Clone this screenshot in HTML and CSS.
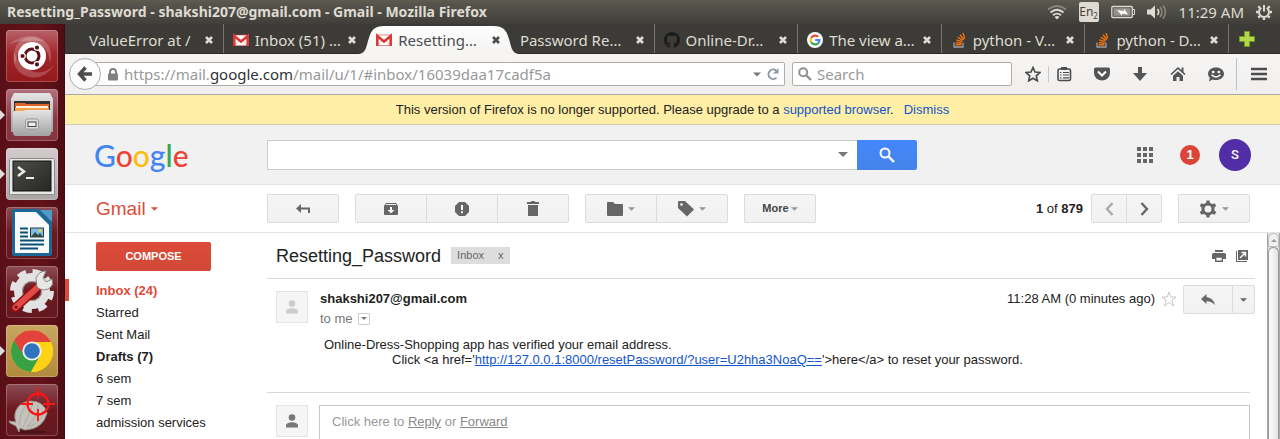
FILE: index.html
```html
<!DOCTYPE html>
<html lang="en">
<head>
<meta charset="utf-8">
<title>Resetting_Password - shakshi207@gmail.com - Gmail</title>
<link rel="stylesheet" href="styles.css">
</head>
<body>
<svg class="defs" width="0" height="0" aria-hidden="true">
  <defs>
    <linearGradient id="silver" x1="0" y1="0" x2="0" y2="1"><stop offset="0" stop-color="#e4e4e4"/><stop offset="1" stop-color="#a2a2a2"/></linearGradient>
    <linearGradient id="dark" x1="0" y1="0" x2="1" y2="1"><stop offset="0" stop-color="#4d4d4b"/><stop offset="1" stop-color="#262624"/></linearGradient>
    <linearGradient id="tabfill" x1="0" y1="0" x2="0" y2="1"><stop offset="0" stop-color="#fdfdfd"/><stop offset="1" stop-color="#f5f4f3"/></linearGradient>
    <symbol id="close" viewBox="0 0 10 10"><path d="M2 2l6 6M8 2l-6 6" stroke="currentColor" stroke-width="2.6"/></symbol>
    <symbol id="mail" viewBox="0 0 16 16"><rect y="3" width="16" height="11" rx="1" fill="#fff"/><path d="M2 13L6 8.500M14 13l-4-4.500" stroke="#d9b8b5"/><path d="M1.300 14V4L8 9.500 14.700 4v10" fill="none" stroke="#dc3a36" stroke-width="2.600"/><path d="M0 3h16M0 13.500h16" stroke="#dc3a36" stroke-opacity=".6"/></symbol>
    <symbol id="stack" viewBox="0 0 16 16"><path d="M3 10.500V15h9v-4.500" fill="none" stroke="#9aa0a6" stroke-width="1.300"/><path d="M4.500 12.800h6M4.700 10.600l6 .7M5.300 8l5.800 1.700M6.700 5.200l5.200 3.200M9 2.800l4 4.700M12 1l1.800 5.400" stroke="#f0720f" stroke-width="1.400"/></symbol>
    <symbol id="caret" viewBox="0 0 8 4"><path d="M0 0h8L4 4z" fill="currentColor"/></symbol>
    <symbol id="person" viewBox="0 0 14 14"><circle cx="7" cy="3.500" r="3.300" fill="currentColor"/><path d="M1 13.500v-2C1 9.500 4.500 8.300 7 8.300s6 1.200 6 3.200v2z" fill="currentColor"/></symbol>
  </defs>
</svg>

<header class="panel">
  <div class="panel-title">Resetting_Password - shakshi207@gmail.com - Gmail - Mozilla Firefox</div>
  <div class="indicators">
    <svg width="20" height="16" viewBox="0 0 20 16" fill="none" stroke-width="1.800"><path d="M1 5.500Q10-1.500 19 5.500" stroke="#8a877f"/><path d="M3.500 8.500Q10 3 16.500 8.500M6 11.200q4-3.200 8 0" stroke="#dfdbd2"/><path d="M7.500 13q2.500-2 5 0L10 15.500z" fill="#dfdbd2"/></svg>
    <span class="lang">En<sub>2</sub></span>
    <svg width="24" height="14" viewBox="0 0 24 14"><rect x=".8" y="1.500" width="20.500" height="11" rx="1" fill="none" stroke="#dfdbd2" stroke-width="1.300"/><rect x="2.500" y="3.200" width="17" height="7.600" fill="#96938c"/><path d="M22 4.500h1.500v5H22" stroke="#dfdbd2" fill="none"/><path d="M6 5l7 1 0-2.500 4 6-6-1v2.300z" fill="#fff"/></svg>
    <svg width="20" height="16" viewBox="0 0 20 16"><path d="M0 5.500h3.500L8 1.500v13L3.500 10.500H0z" fill="#dfdbd2"/><g fill="none" stroke-width="1.600"><path d="M10.500 5q2.400 3 0 6" stroke="#dfdbd2"/><path d="M13 3q4 5 0 10M16 1.500q5 6.500 0 13" stroke="#8a877f"/></g></svg>
    <time>11:29 AM</time>
    <svg width="16" height="16" viewBox="0 0 16 16" fill="none" stroke="#dfdbd2"><path d="M5.300 3.800a5 5 0 1 0 5.400 0" stroke-width="2"/><path d="M8 1v6.500" stroke-width="2"/><path d="M0 8h2M14 8h2M2.300 2.300l1.600 1.600M13.700 2.300l-1.600 1.600M2.300 13.700l1.600-1.600M13.700 13.700l-1.600-1.600M8 16v-2" stroke-width="2.400"/></svg>
  </div>
</header>

<div class="desktop">
  <nav class="launcher" aria-label="Launcher">
    <button class="tile dash" aria-label="Dash"><svg viewBox="0 0 52 52"><g fill="#fff" fill-opacity=".2"><path d="M3 14Q22 1 36 9q12 8 8 25-1-18-15-22Q16 9 3 14z"/><path d="M9 36Q4 14 20 8q10-3 18 4-14-4-22 5-6 7-7 19z"/><path d="M8 22q-3 20 15 25 16 3 25-12-12 12-24 5Q12 34 8 22z"/></g><circle cx="26" cy="26" r="14" fill="#fff"/><circle cx="26" cy="26" r="7" fill="none" stroke="#5c1018" stroke-width="3"/><g fill="#5c1018" stroke="#fff" stroke-width="1.200"><circle cx="16.500" cy="26" r="2.700"/><circle cx="31" cy="17.600" r="2.700"/><circle cx="31" cy="34.400" r="2.700"/></g></svg></button>
    <button class="tile files running" aria-label="Files"><svg viewBox="0 0 52 52"><path d="M8 4h36l3 6v33H5V10z" fill="url(#silver)"/><path d="M8 12h36v10H8z" fill="#343434"/><path d="M9 14h10l1 1h23v7H9z" fill="#e0652a"/><path d="M10 17h32v3H10z" fill="#fff3dd"/><path d="M9 19h34v3H9z" fill="#f5a24e"/><path d="M7 24q0-2 2-2h8l3-1h25v22q0 4-3 4H10q-3 0-3-4z" fill="url(#silver)"/><rect x="19.500" y="30" width="13" height="10" rx="2" fill="#ddd" stroke="#999"/><rect x="22" y="33" width="8" height="4.500" fill="#eee" stroke="#444"/></svg></button>
    <button class="tile terminal running" aria-label="Terminal"><svg viewBox="0 0 52 52"><rect x="3.500" y="10.500" width="45" height="36" rx="1" fill="#e8e8e6" stroke="#8c8b89"/><rect x="7" y="13" width="38" height="30" fill="url(#dark)" stroke="#111"/><path d="M12 19l6 4.500-6 4.500" fill="none" stroke="#eee" stroke-width="2.400"/><path d="M20 30h8" stroke="#eee" stroke-width="2"/></svg></button>
    <button class="tile writer" aria-label="Writer"><svg viewBox="0 0 52 52"><path d="M8 2h25l13 13v32q0 2-2 2H8q-2 0-2-2V4q0-2 2-2z" fill="#1b6798"/><path d="M9 5h21l13 13v28H9z" fill="#fafafa"/><path d="M34 3h12v12z" fill="#4d9ac9"/><path d="M14 21.500h8M14 25.500h8M14 29.500h8M14 33.500h24M14 37.500h24M14 41.500h18" stroke="#075077" stroke-width="2"/><rect x="24.500" y="21" width="13" height="9" fill="#80bce5" stroke="#243c50"/><circle cx="34" cy="23.500" r="1.500" fill="#f6d33d"/><path d="M25 30l4-5 3 3 2-2 3 4z" fill="#314b42"/></svg></button>
    <button class="tile settings" aria-label="System Settings"><svg viewBox="0 0 52 52"><circle cx="26" cy="25" r="19" fill="none" stroke="#e2e2e2" stroke-width="6" stroke-dasharray="8.500 6.420"/><circle cx="26" cy="25" r="14" fill="none" stroke="#e2e2e2" stroke-width="8"/><circle cx="26" cy="25" r="9.500" fill="none" stroke="#aaa"/><path d="M9 42L33 20" stroke="#8e1012" stroke-width="9" stroke-linecap="round"/><path d="M9.500 41.500L32.500 20.500" stroke="#df4b49" stroke-width="6" stroke-linecap="round"/><path d="M31 21l-1-9q3-7 10-7l-3 7 3 4 6-3q2 7-4 10-5 2-8 0z" fill="#e8e8e6" stroke="#888"/><circle cx="10" cy="41" r="1.600" fill="#7a1012"/></svg></button>
    <button class="tile chrome running" aria-label="Chrome"><svg viewBox="0 0 52 52"><circle cx="26" cy="26" r="21" fill="#ffd313"/><path d="M7.900 15.500A21 21 0 0 1 44.100 15.500L45 17H26L17 31z" fill="#e2443d"/><path d="M7.900 15.500A21 21 0 0 0 25 47l9-16-16-.5z" fill="#38a144"/><path d="M26 17h19a21 21 0 0 1-20 30l9-16z" fill="#ffd313"/><circle cx="26" cy="26" r="9.600" fill="#f3f3f3"/><circle cx="26" cy="26" r="7.800" fill="#2f74bd"/></svg></button>
    <button class="tile shutter" aria-label="Screenshot"><svg viewBox="0 0 52 52"><ellipse cx="26" cy="48" rx="15" ry="1.500" fill="#45131a"/><path d="M3 37l7 1C6 28 13 18 24 17q14 0 17 12-4 16-22 17l-5-2-1 4-3-6-6-3z" fill="#c3c3bb" stroke="#92928b"/><path d="M13 42Q14 24 24 18M17 43q7-14 10-24M20 43q12-9 12-22M22 43q14-5 16-16" fill="none" stroke="#ababa4"/><circle cx="32" cy="20" r="10.500" fill="none" stroke="#f91515" stroke-width="2.300"/><path d="M32 3v12M32 25v12M15 20h12M37 20h12" stroke="#f91515" stroke-width="1.800"/></svg></button>
  </nav>

  <div class="browser">
    <div class="tabs">
      <div class="tab"><span class="tab-label">ValueError at /</span><button class="close" aria-label="Close tab"><svg><use href="#close"/></svg></button></div>
      <div class="tab plain"><svg class="fav"><use href="#mail"/></svg><span class="tab-label">Inbox (51) …</span><button class="close" aria-label="Close tab"><svg><use href="#close"/></svg></button></div>
      <div class="tab active"><svg class="tab-shape" viewBox="0 0 164 28" preserveAspectRatio="none"><path d="M0 28C10 28 9 20 12 12 14 4 18 0 27 0H137c9 0 13 4 15 12 3 8 2 16 12 16z" fill="url(#tabfill)"/></svg><svg class="fav"><use href="#mail"/></svg><span class="tab-label">Resetting…</span><button class="close" aria-label="Close tab"><svg><use href="#close"/></svg></button></div>
      <div class="tab"><span class="tab-label">Password Re…</span><button class="close" aria-label="Close tab"><svg><use href="#close"/></svg></button></div>
      <div class="tab"><svg class="fav" viewBox="0 0 16 16"><path fill="#1b1b1b" d="M8 0C3.580 0 0 3.580 0 8c0 3.540 2.290 6.530 5.470 7.590.4.070.55-.17.55-.38v-1.500c-2.200.5-2.700-.9-2.700-.9-.4-.9-.9-1.200-.9-1.200-.7-.5.1-.5.1-.5.8.1 1.200.8 1.200.8.700 1.200 1.900.9 2.300.7.100-.5.300-.9.500-1.100-1.800-.2-3.600-.9-3.600-4 0-.9.300-1.600.8-2.100-.1-.2-.4-1 .1-2.100 0 0 .7-.2 2.200.8a7.600 7.600 0 0 1 4 0c1.500-1 2.200-.8 2.200-.8.400 1.100.2 1.900.1 2.100.5.600.8 1.300.8 2.100 0 3.100-1.900 3.800-3.700 4 .3.200.6.700.6 1.500v2.200c0 .2.100.5.500.4A8 8 0 0 0 16 8c0-4.420-3.580-8-8-8z"/></svg><span class="tab-label">Online-Dr…</span><button class="close" aria-label="Close tab"><svg><use href="#close"/></svg></button></div>
      <div class="tab"><svg class="fav" viewBox="0 0 16 16" fill="none" stroke-width="2.200"><circle cx="8" cy="8" r="8" fill="#fff"/><path d="M4.200 5.800A4.500 4.500 0 0 1 11.200 4.800" stroke="#ea4335"/><path d="M4.200 5.800a4.500 4.500 0 0 0 0 4.400" stroke="#fbbc05"/><path d="M4.200 10.200a4.500 4.500 0 0 0 6.800 1.200" stroke="#34a853"/><path d="M11 11.400A4.500 4.500 0 0 0 12.400 8H8.200" stroke="#4285f4"/></svg><span class="tab-label">The view a…</span><button class="close" aria-label="Close tab"><svg><use href="#close"/></svg></button></div>
      <div class="tab"><svg class="fav"><use href="#stack"/></svg><span class="tab-label">python - V…</span><button class="close" aria-label="Close tab"><svg><use href="#close"/></svg></button></div>
      <div class="tab"><svg class="fav"><use href="#stack"/></svg><span class="tab-label">python - D…</span><button class="close" aria-label="Close tab"><svg><use href="#close"/></svg></button></div>
      <button class="new-tab" aria-label="New tab"><svg width="16" height="16" viewBox="0 0 16 16"><path d="M5.500.5h5v5h5v5h-5v5h-5v-5h-5v-5h5z" fill="#b4d84a" stroke="#6f9a1e"/></svg></button>
    </div>

    <div class="toolbar">
      <button class="back" aria-label="Back"><svg width="16" height="16" viewBox="0 0 16 16" fill="none" stroke="#4c4c4c" stroke-width="3.400"><path d="M8.500 1.500L2.500 8l6 6.500M3 8h12"/></svg></button>
      <div class="url">
        <svg width="10" height="13" viewBox="0 0 10 13"><path d="M2 6V4a3 3 0 0 1 6 0v2" fill="none" stroke="#808080" stroke-width="2"/><rect y="5.500" width="10" height="7" rx="1" fill="#808080"/></svg>
        <div class="address">https://mail.<b>google.com</b>/mail/u/1/#inbox/16039daa17cadf5a</div>
        <svg class="url-caret"><use href="#caret"/></svg>
        <svg width="12" height="12" viewBox="0 0 12 12"><path d="M9.500 9.600A4.700 4.700 0 1 1 9.300 2.700" fill="none" stroke="#8a9aaa" stroke-width="2"/><path d="M11.500 0v5.500H6z" fill="#8a9aaa"/></svg>
      </div>
      <label class="search">
        <svg width="14" height="14" viewBox="0 0 14 14" fill="none" stroke="#909090"><circle cx="5.200" cy="5.200" r="4" stroke-width="2"/><path d="M8.300 8.300L13 13" stroke-width="2.400"/></svg>
        <input type="text" placeholder="Search" aria-label="Search the web">
      </label>
      <div class="tools">
        <button aria-label="Bookmark"><svg viewBox="0 0 16 16"><path d="M8 1.500l2 4.500 5 .5-3.700 3.300 1 5L8 12.300l-4.300 2.500 1-5L1 6.500 6 6z" fill="none" stroke="#4c4c4c" stroke-width="1.700"/></svg></button>
        <button class="ruled" aria-label="Bookmarks list"><svg viewBox="0 0 16 16"><rect x="2" y="3" width="12.500" height="11.500" rx="1.500" fill="none" stroke="#4c4c4c" stroke-width="1.600"/><path d="M5 1h6v3H5z" fill="#4c4c4c"/><path d="M4 6.500h1.500M4 9h1.500M4 11.800h1.500M7 6.500h6M7 9h6M7 11.800h6" stroke="#4c4c4c" stroke-width="1.200"/></svg></button>
        <button aria-label="Pocket"><svg viewBox="0 0 16 16"><path d="M1.500 1.500h13q1.500 0 1.500 1.500v4a8 7.500 0 0 1-16 0V3q0-1.500 1.500-1.500z" fill="#555"/><path d="M4 5.500l4 4 4-4" fill="none" stroke="#fff" stroke-width="2"/></svg></button>
        <button aria-label="Downloads"><svg viewBox="0 0 16 16"><path d="M6 1h4v6h5l-7 8-7-8h5z" fill="#555"/></svg></button>
        <button aria-label="Home"><svg viewBox="0 0 16 16"><path d="M1 8.500l7-6.500 7 6.500" fill="none" stroke="#4c4c4c" stroke-width="1.600"/><path d="M11.500 1.500h2V6h-2zM3 9.800l5-4.600 5 4.600V15H9.500v-4h-3v4H3z" fill="#555"/></svg></button>
        <button aria-label="Chat"><svg viewBox="0 0 16 16"><path d="M8 1.500c4.400 0 8 2.700 8 6.200s-3.600 6.300-8 6.300q-2 0-3.500-.6L1 15.500l.8-3.800Q0 10 0 7.700C0 4.200 3.600 1.500 8 1.500z" fill="#555"/><circle cx="5.200" cy="6" r="1.300" fill="#fff"/><circle cx="10.800" cy="6" r="1.300" fill="#fff"/><path d="M3.500 8.800q4.500 4.500 9 0" fill="none" stroke="#fff" stroke-width="1.500"/></svg></button>
        <button class="menu" aria-label="Menu"><svg viewBox="0 0 16 16"><path d="M0 3h16M0 8h16M0 13h16" stroke="#4c4c4c" stroke-width="2.600"/></svg></button>
      </div>
    </div>

    <div class="notice">This version of Firefox is no longer supported. Please upgrade to a <a href="#">supported browser</a>.<a class="dismiss" href="#">Dismiss</a></div>

    <div class="gbar">
      <a class="logo" href="#" aria-label="Google"><span class="blue">G</span><span class="red">o</span><span class="yellow">o</span><span class="blue">g</span><span class="green">l</span><span class="red">e</span></a>
      <form class="gsearch">
        <input type="text" aria-label="Search mail">
        <button type="button" class="options" aria-label="Search options"><svg width="10" height="5"><use href="#caret"/></svg></button>
        <button type="button" class="go" aria-label="Search"><svg width="16" height="16" viewBox="0 0 16 16" fill="none" stroke="#fff"><circle cx="6" cy="6" r="4.500" stroke-width="2"/><path d="M9.500 9.500L15 15" stroke-width="2.400"/></svg></button>
      </form>
      <div class="account">
        <button aria-label="Apps"><svg width="16" height="16" viewBox="0 0 16 16" fill="#666"><path d="M0 0h4v4H0zM6 0h4v4H6zM12 0h4v4h-4zM0 6h4v4H0zM6 6h4v4H6zM12 6h4v4h-4zM0 12h4v4H0zM6 12h4v4H6zM12 12h4v4h-4z"/></svg></button>
        <button class="count">1</button>
        <button class="avatar">S</button>
      </div>
    </div>

    <div class="actions">
      <button class="brand">Gmail <svg width="7" height="4"><use href="#caret"/></svg></button>
      <div class="groups">
        <div class="group"><button aria-label="Back to inbox"><svg width="14" height="10" viewBox="0 0 14 10"><path d="M0 4.500L5 0v3.500h9V9h-2V5.500H5V9z" fill="#666"/></svg></button></div>
        <div class="group">
          <button aria-label="Archive"><svg width="14" height="14" viewBox="0 0 14 14"><path d="M2 1h10l2 3v8q0 1-1 1H1q-1 0-1-1V4z" fill="#666"/><path d="M2 2.500h10" stroke="#f3f3f3"/><path d="M6 5h2v3h2.500L7 11.300 3.500 8H6z" fill="#fff"/></svg></button>
          <button aria-label="Report spam"><svg width="14" height="14" viewBox="0 0 14 14"><path d="M4 0h6l4 4v6l-4 4H4l-4-4V4z" fill="#666"/><path d="M6 3h2v5H6zM6 9.300h2v2H6z" fill="#fff"/></svg></button>
          <button aria-label="Delete"><svg width="12" height="15" viewBox="0 0 12 15"><path d="M0 1h3.500l1-1h3l1 1H12v2H0zM1 4h10v11H1z" fill="#666"/></svg></button>
        </div>
        <div class="group">
          <button class="drop" aria-label="Move to"><svg width="16" height="14" viewBox="0 0 16 14"><path d="M1 0h5l2 2h7q1 0 1 1v10q0 1-1 1H1q-1 0-1-1V1q0-1 1-1z" fill="#666"/></svg><svg width="7" height="4"><use href="#caret"/></svg></button>
          <button class="drop" aria-label="Labels"><svg width="16" height="16" viewBox="0 0 16 16"><path d="M1 0h6l9 8.500-7 7L0 7V1q0-1 1-1z" fill="#666"/><circle cx="3.500" cy="3.500" r="1.300" fill="#fff"/></svg><svg width="7" height="4"><use href="#caret"/></svg></button>
        </div>
        <div class="group"><button class="more">More <svg width="7" height="4"><use href="#caret"/></svg></button></div>
      </div>
      <div class="pager"><b>1</b> of <b>879</b></div>
      <div class="group pair">
        <button aria-label="Newer"><svg width="9" height="14" viewBox="0 0 9 14" fill="none" stroke="#aaa" stroke-width="2.400"><path d="M7.500 1L2 7l5.500 6"/></svg></button>
        <button aria-label="Older"><svg width="9" height="14" viewBox="0 0 9 14" fill="none" stroke="#666" stroke-width="2.400"><path d="M1.500 1L7 7l-5.500 6"/></svg></button>
      </div>
      <div class="group"><button class="drop" aria-label="Settings"><svg width="18" height="18" viewBox="0 0 18 18"><circle cx="9" cy="9" r="5" fill="none" stroke="#666" stroke-width="3"/><path d="M7 4L7.500.500h3L11 4zM7 14l.5 3.500h3L11 14zM5.800 4.400L2.300 3.200.8 6l2.800 2.200zM12.200 4.400l3.500-1.200L17.200 6l-2.800 2.200zM5.800 13.600l-3.500 1.200L.8 12l2.800-2.200zM12.200 13.600l3.500 1.200 1.500-2.800-2.800-2.200z" fill="#666"/></svg><svg width="7" height="4"><use href="#caret"/></svg></button></div>
    </div>

    <div class="workspace">
      <aside class="side">
        <button class="compose">COMPOSE</button>
        <nav>
          <a class="current" href="#">Inbox (24)</a>
          <a href="#">Starred</a>
          <a href="#">Sent Mail</a>
          <a class="strong" href="#">Drafts (7)</a>
          <a href="#">6 sem</a>
          <a href="#">7 sem</a>
          <a href="#">admission services</a>
        </nav>
      </aside>
      <main class="thread">
        <div class="subject">
          <h1>Resetting_Password</h1>
          <span class="chip">Inbox<button aria-label="Remove label">x</button></span>
          <div class="subject-tools">
            <button aria-label="Print"><svg width="14" height="12" viewBox="0 0 14 12"><path d="M3 0h8v2H3zM1.500 3h11Q14 3 14 4.500V9h-3V7H3v2H0V4.500Q0 3 1.500 3z" fill="#666"/><path d="M3.700 7h6.600v4.300H3.700z" fill="#fff" stroke="#666" stroke-width="1.400"/></svg></button>
            <button aria-label="Open in new window"><svg width="12" height="12" viewBox="0 0 12 12"><path d="M2 0h10v10H2zM0 1h1v10h10v1H0z" fill="#666"/><path d="M4 8l5-5M5.500 2.500h4v4" fill="none" stroke="#fff" stroke-width="1.400"/></svg></button>
          </div>
        </div>
        <article class="message">
          <span class="face pale"><svg width="14" height="14"><use href="#person"/></svg></span>
          <div class="content">
            <div class="meta">
              <div class="from">
                <strong>shakshi207@gmail.com</strong>
                <div class="to">to me <button aria-label="Show details"><svg width="6" height="3"><use href="#caret"/></svg></button></div>
              </div>
              <div class="when">11:28 AM (0 minutes ago)</div>
              <button class="star" aria-label="Star"><svg width="16" height="16" viewBox="0 0 16 16"><path d="M8 1l1.800 5H15l-4.200 3.200L12.500 15 8 11.400 3.500 15l1.700-5.800L1 6h5.200z" fill="none" stroke="#c6c6c6"/></svg></button>
              <div class="group reply">
                <button aria-label="Reply"><svg width="14" height="12" viewBox="0 0 14 12"><path d="M5.500 0v3q7 1 8.500 8-3.500-4-8.500-3.800V10L0 5z" fill="#666"/></svg></button>
                <button class="narrow" aria-label="More"><svg width="7" height="4"><use href="#caret"/></svg></button>
              </div>
            </div>
            <div class="body">
              <p>Online-Dress-Shopping app has verified your email address.</p>
              <p class="indent">Click &lt;a href='<a href="#">http://127.0.0.1:8000/resetPassword/?user=U2hha3NoaQ==</a>'&gt;here&lt;/a&gt; to reset your password.</p>
            </div>
          </div>
        </article>
        <div class="compose-reply">
          <span class="face"><svg width="14" height="14"><use href="#person"/></svg></span>
          <div class="reply-box">Click here to <a href="#">Reply</a> or <a href="#">Forward</a></div>
        </div>
      </main>
      <div class="scrollbar"><button aria-label="Scroll up"><svg width="6" height="3" viewBox="0 0 6 3"><path d="M0 3h6L3 0z" fill="#999"/></svg></button><div class="thumb"></div></div>
    </div>
  </div>
</div>
</body>
</html>
```
FILE: styles.css
```css
* { box-sizing: border-box; }
body { margin: 0; height: 100vh; overflow: hidden; display: flex; flex-direction: column; font: 13px/15px "Liberation Sans", Arial, sans-serif; color: #222; background: #fff; }
button { border: 0; padding: 0; margin: 0; background: none; font: inherit; color: inherit; display: flex; align-items: center; justify-content: center; }
svg { display: block; flex: none; }
.defs { position: absolute; }
a { color: #15c; text-decoration: none; }

/* Desktop panel */
.panel { flex: none; height: 24px; padding: 0 8px 0 7px; display: flex; align-items: center; justify-content: space-between; background: linear-gradient(#5f5d52, #57554c 15%, #3f3e3a); color: #dfdbd2; font: 15px/24px "Noto Sans", sans-serif; }
.panel-title { font: bold 14px/24px "Noto Sans", sans-serif; }
.indicators { display: flex; align-items: center; gap: 12px; }
.lang { width: 20px; height: 20px; border-radius: 2px; background: #dfdbd2; color: #45433e; font-size: 12px; line-height: 20px; text-align: center; white-space: nowrap; }
.lang sub { font-size: 8px; line-height: 1; }

/* Launcher */
.desktop { flex: 1; min-height: 0; display: flex; }
.launcher { flex: none; width: 65px; padding: 6px 7px 0 6px; display: flex; flex-direction: column; gap: 7px; background: linear-gradient(90deg, #5a0f17, #641219 60%, #500d14); border-right: 1px solid #3d0a10; }
.tile { position: relative; flex: none; width: 52px; height: 52px; border-radius: 4px; background: linear-gradient(#8b4c54, #6d1820 50%, #641820); box-shadow: inset 0 0 0 1px rgba(255, 255, 255, .22); }
.tile svg { width: 52px; height: 52px; }
.dash { background: linear-gradient(#b7626a, #a3282c 45%, #93191d); }
.files { background: linear-gradient(#b0707c, #8a3541 60%, #853440); }
.terminal { background: linear-gradient(#d2cccd, #aaa4a4); }
.chrome { background: linear-gradient(#c7a663, #b18a3b); }
.running::before { content: ""; position: absolute; left: -6px; top: 21px; border: 5px solid transparent; border-left-color: #ddd; border-right: 0; }

/* Tab strip */
.browser { flex: 1; min-width: 0; display: flex; flex-direction: column; }
.tabs { flex: none; height: 30px; padding-left: 15px; display: flex; background: #3c3b37; border-bottom: 1px solid #2b2a27; color: #dfdbd2; font: 15px/20px "Noto Sans", sans-serif; }
.tab { flex: 1; min-width: 0; position: relative; display: flex; align-items: center; gap: 6px; padding: 3px 9px 0 9px; border-right: 1px solid #77756c; }
.plain, .active { border-right-color: transparent; }
.active { color: #4c4c4c; }
.tab > * { position: relative; }
.tab > .tab-shape { position: absolute; left: -10px; top: 2px; width: calc(100% + 21px); height: 28px; }
.fav { width: 16px; height: 16px; }
.tab-label { flex: 1; min-width: 0; white-space: nowrap; }
.close svg { width: 10px; height: 10px; }
.new-tab { flex: none; width: 51px; padding-right: 15px; }

/* Navigation toolbar */
.toolbar { flex: none; height: 41px; padding: 0 13px 0 4px; display: flex; align-items: center; background: linear-gradient(#f6f5f4, #f0efed); border-bottom: 1px solid #a9a9a9; font: 15px/22px "Noto Sans", sans-serif; color: #999; }
.back { position: relative; z-index: 1; flex: none; width: 32px; height: 32px; border: 1px solid #a6adb5; border-radius: 16px; background: #fcfcfc; }
.url, .search { height: 24px; border: 1px solid #b0aeab; border-radius: 2px; background: #fff; display: flex; align-items: center; }
.url { flex: 1; min-width: 0; margin-left: -8px; padding: 0 5px 0 14px; gap: 6px; }
.address { flex: 1; min-width: 0; white-space: nowrap; overflow: hidden; }
.address b { font-weight: normal; color: #333; }
.url-caret { width: 8px; height: 5px; color: #777; }
.search { flex: none; width: 220px; margin-left: 7px; padding: 0 5px; gap: 5px; }
.search input { flex: 1; min-width: 0; border: 0; padding: 0; background: none; font: inherit; }
.search input::placeholder { color: #999; opacity: 1; }
.tools { flex: none; display: flex; gap: 22px; padding-left: 13px; }
.tools svg { width: 16px; height: 16px; }
.tools .ruled { position: relative; margin-left: -7px; }
.ruled::before { content: ""; position: absolute; left: -8px; top: 0; height: 16px; border-left: 1px solid #c5c9ce; }
.tools .menu { height: 32px; margin: -8px 0 -8px -10px; border-left: 1px solid #bbc2ca; padding-left: 14px; }

/* Unsupported browser notice */
.notice { flex: none; height: 30px; line-height: 29px; text-align: center; background: #ffeea6; border-bottom: 1px solid #d0ccb8; white-space: pre; }
.dismiss { margin-left: 10px; }

/* Google bar */
.gbar { flex: none; height: 60px; padding-right: 29px; display: flex; align-items: center; background: #f1f1f1; border-bottom: 1px solid #e3e3e3; }
.logo { flex: none; width: 202px; padding-left: 29px; font: 30px/44px Lato, sans-serif; font-weight: 500; }
.blue { color: #4285f4; }
.red { color: #ea4335; }
.yellow { color: #fbbc05; }
.green { color: #34a853; }
.gsearch { flex: 0 1 650px; min-width: 0; display: flex; height: 30px; }
.gsearch input { flex: 1; min-width: 0; border: 1px solid #ccc; border-right: 0; background: #fff; padding: 0 8px; }
.options { width: 28px; background: #fff; border: solid #ccc; border-width: 1px 0; color: #777; }
.go { width: 60px; border-radius: 0 2px 2px 0; background: linear-gradient(#4387fd, #4683ea); }
.account { margin-left: auto; display: flex; align-items: center; }
.count { width: 20px; height: 20px; margin: 0 19px 0 27px; border-radius: 10px; background: #db4437; color: #fff; font-weight: bold; }
.avatar { width: 32px; height: 32px; border-radius: 16px; background: #512da8; color: #fff; font-family: Roboto, sans-serif; font-weight: 500; }

/* Mail actions */
.actions { flex: none; height: 48px; padding-right: 30px; display: flex; align-items: center; border-bottom: 1px solid #e5e5e5; }
.brand { flex: none; width: 202px; padding-left: 31px; justify-content: flex-start; gap: 5px; color: #dd4b39; font-size: 19px; line-height: 24px; }
.groups { display: flex; gap: 16px; }
.group { display: flex; }
.group button { width: 72px; height: 29px; border: 1px solid #dcdcdc; background: linear-gradient(#f5f5f5, #f1f1f1); }
.group button + button { margin-left: -1px; }
.group button:first-child { border-radius: 2px 0 0 2px; }
.group button:last-child { border-radius: 0 2px 2px 0; }
.group .drop { gap: 5px; color: #999; }
.group .more { gap: 2px; color: #444; font-size: 11px; font-weight: bold; }
.more svg { color: #999; }
.pager { margin: 0 8px 0 auto; }
.pair { margin-right: 16px; }
.group.pair button { width: 36px; }

/* Workspace */
.workspace { flex: 1; min-height: 0; display: flex; }
.side { flex: none; width: 202px; padding-top: 9px; }
.compose { width: 115px; height: 29px; margin-left: 31px; border-radius: 2px; background: linear-gradient(#dd4b39, #d14836); color: #fff; font-size: 11px; font-weight: bold; }
.side nav { margin-top: 8px; display: flex; flex-direction: column; }
.side nav a { padding-left: 31px; padding-top: 1px; line-height: 22px; height: 22px; color: #222; }
.side nav .current { border-left: 4px solid #dd4b39; padding-left: 27px; color: #dd4b39; font-weight: bold; }
.side nav .strong { font-weight: bold; }
.thread { flex: 1; min-width: 0; min-height: 0; margin-right: 12px; display: flex; flex-direction: column; }
.subject { flex: none; height: 46px; padding: 0 7px 0 9px; display: flex; align-items: center; border-bottom: 1px solid #d8d8d8; }
.subject h1 { margin: 0; font-size: 18px; line-height: 24px; font-weight: normal; }
.chip { margin-left: 10px; padding: 0 6px; height: 17px; display: flex; align-items: center; gap: 14px; background: #ddd; color: #666; font-size: 11px; }
.subject-tools { margin-left: auto; display: flex; gap: 10px; }
.message { flex: none; display: flex; gap: 12px; margin-right: 5px; padding: 6px 0 25px 9px; border-bottom: 1px solid #d8d8d8; }
.face { flex: none; width: 32px; height: 32px; display: flex; align-items: center; justify-content: center; border: 1px solid #e5e5e5; background: #f5f5f5; color: #777; }
.pale { margin-top: 6px; color: #ccc; }
.content { flex: 1; min-width: 0; }
.meta { display: flex; align-items: flex-start; margin-right: -5px; }
.from { flex: 1; padding-top: 6px; }
.to { display: flex; gap: 5px; align-items: center; margin-top: 5px; color: #777; }
.to button { width: 12px; height: 12px; border: 1px solid #ccc; border-radius: 1px; }
.when { padding-top: 6px; }
.star { margin: 6px 6px 0; }
.group.reply button { width: 50px; color: #666; }
.group.reply .narrow { width: 23px; }
.body { padding: 11px 0 0 4px; }
.body p { margin: 0; }
.body .indent { padding-left: 68px; }
.body a, .reply-box a { text-decoration: underline; }
.compose-reply { flex: 1; min-height: 0; display: flex; gap: 11px; padding: 12px 5px 0 9px; }
.reply-box { flex: 1; padding: 8px 12px 0; border: 1px solid #c8c8c8; border-bottom: 0; color: #999; }
.reply-box a { color: #888; }
.scrollbar { flex: none; width: 13px; background: #e4e2e0; border: solid #a9a7a4; border-width: 0 1px; display: flex; flex-direction: column; }
.scrollbar button { height: 14px; border: 1px solid #bbb; border-radius: 6px 6px 0 0; background: #f2f1f0; }
.thumb { flex: 1; border: 1px solid #999; border-bottom: 0; border-radius: 6px 6px 0 0; background: linear-gradient(90deg, #fcfcfc, #e4e3e1); }
```
